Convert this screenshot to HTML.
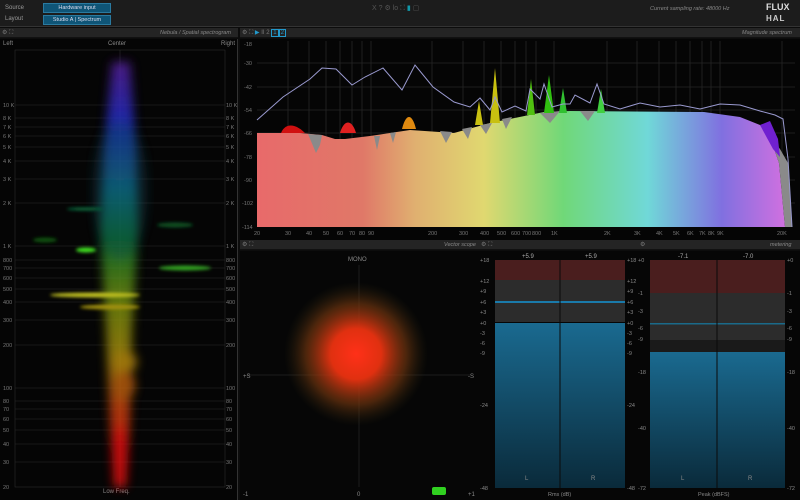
<!DOCTYPE html>
<html><head><meta charset="utf-8"><style>
*{margin:0;padding:0;box-sizing:border-box}
body{width:800px;height:500px;background:#0c0c0c;font-family:"Liberation Sans",sans-serif;color:#aaa;overflow:hidden;position:relative}
.a{position:absolute}
.hdr{position:absolute;height:10px;background:#242424;border-bottom:1px solid #111}
.t{position:absolute;font-size:6px;color:#999;white-space:nowrap}
.it{font-style:italic;color:#888;font-size:5.5px}
.btn{position:absolute;background:#0f5577;border:1px solid #2a7aa0;color:#dde;font-size:5.5px;text-align:center;line-height:8px}
</style></head><body>
<div class="a" style="left:0;top:0;width:800px;height:27px;background:#1c1c1c;border-bottom:1px solid #333"></div>
<div class="t" style="left:5px;top:5px">Source</div>
<div class="t" style="left:5px;top:16px">Layout</div>
<div class="btn" style="left:43px;top:3px;width:68px;height:10px">Hardware input</div>
<div class="btn" style="left:43px;top:15px;width:68px;height:10px">Studio A | Spectrum</div>
<div class="t" style="left:372px;top:4px;color:#555;font-size:7px">X ? ⚙ lo ⛶ <span style="color:#19a">▮</span> ▢</div>
<div class="t it" style="left:650px;top:6px">Current sampling rate: 48000 Hz</div>
<div class="t" style="left:766px;top:2px;color:#ddd;font-weight:bold;font-size:9px">FLUX</div>
<div class="t" style="left:766px;top:14px;color:#ccc;font-weight:bold;font-size:8px;letter-spacing:1px">HAL</div>

<!-- left panel -->
<div class="hdr" style="left:0;top:28px;width:238px"></div>
<div class="t" style="left:2px;top:29px;color:#777">⚙ ⛶</div>
<div class="t it" style="left:160px;top:30px">Nebula / Spatial spectrogram</div>
<div class="a" style="left:0;top:39px;width:238px;height:461px;background:#050505;border-right:1px solid #333"></div>
<div class="t" style="left:3px;top:41px;color:#888">Left</div>
<div class="t" style="left:108px;top:41px;color:#888">Center</div>
<div class="t" style="left:221px;top:41px;color:#888">Right</div>
<div class="t" style="left:103px;top:489px;color:#888">Low Freq.</div>
<svg class="a" style="left:0;top:0" width="240" height="500">
<defs>
<linearGradient id="col" x1="0" y1="0" x2="0" y2="1">
<stop offset="0" stop-color="#5a20a0"/><stop offset=".15" stop-color="#2030d0"/><stop offset=".3" stop-color="#1080a0"/><stop offset=".42" stop-color="#108030"/><stop offset=".55" stop-color="#709010"/><stop offset=".7" stop-color="#b09010"/><stop offset=".82" stop-color="#d04010"/><stop offset="1" stop-color="#ff1010"/></linearGradient>
<filter id="b4"><feGaussianBlur stdDeviation="5"/></filter>
<filter id="b2"><feGaussianBlur stdDeviation="1.5"/></filter>
</defs>
<g stroke="#2a2a2a" stroke-width="0.6">
<line x1="15" y1="105" x2="225" y2="105"/><line x1="15" y1="118" x2="225" y2="118"/><line x1="15" y1="127" x2="225" y2="127"/><line x1="15" y1="136" x2="225" y2="136"/><line x1="15" y1="147" x2="225" y2="147"/><line x1="15" y1="161" x2="225" y2="161"/><line x1="15" y1="179" x2="225" y2="179"/><line x1="15" y1="203" x2="225" y2="203"/><line x1="15" y1="246" x2="225" y2="246"/><line x1="15" y1="260" x2="225" y2="260"/><line x1="15" y1="268" x2="225" y2="268"/><line x1="15" y1="278" x2="225" y2="278"/><line x1="15" y1="289" x2="225" y2="289"/><line x1="15" y1="302" x2="225" y2="302"/><line x1="15" y1="320" x2="225" y2="320"/><line x1="15" y1="345" x2="225" y2="345"/><line x1="15" y1="388" x2="225" y2="388"/><line x1="15" y1="401" x2="225" y2="401"/><line x1="15" y1="409" x2="225" y2="409"/><line x1="15" y1="419" x2="225" y2="419"/><line x1="15" y1="430" x2="225" y2="430"/><line x1="15" y1="444" x2="225" y2="444"/><line x1="15" y1="462" x2="225" y2="462"/><line x1="120" y1="50" x2="120" y2="487"/>
<rect x="15" y="50" width="210" height="437" fill="none"/></g>
<g filter="url(#b4)" opacity=".8">
<path d="M112 62 L130 62 L136 150 L138 230 L132 330 L130 420 L126 487 L114 487 L110 420 L106 330 L100 230 L104 150Z" fill="url(#col)"/>
<ellipse cx="120" cy="190" rx="28" ry="70" fill="#105060" opacity=".35"/>
<ellipse cx="125" cy="362" rx="12" ry="10" fill="#c09010"/>
<ellipse cx="125" cy="385" rx="10" ry="14" fill="#c06010"/>
<ellipse cx="120" cy="455" rx="8" ry="30" fill="#f01010"/>
</g>
<g filter="url(#b2)">
<ellipse cx="95" cy="295" rx="45" ry="2.5" fill="#c0c020"/>
<ellipse cx="110" cy="307" rx="30" ry="2.5" fill="#a09010"/>
<ellipse cx="185" cy="268" rx="26" ry="2.5" fill="#30a020"/>
<ellipse cx="86" cy="250" rx="10" ry="2.5" fill="#40e020"/>
<ellipse cx="45" cy="240" rx="12" ry="2.5" fill="#105010"/>
<ellipse cx="85" cy="209" rx="18" ry="1.5" fill="#107040"/>
<ellipse cx="175" cy="225" rx="18" ry="2.5" fill="#105020"/>
</g>
<g fill="#777" font-size="5.5" font-family="Liberation Sans">
<text x="3" y="107">10 K</text><text x="3" y="120">8 K</text><text x="3" y="129">7 K</text><text x="3" y="138">6 K</text><text x="3" y="149">5 K</text><text x="3" y="163">4 K</text><text x="3" y="181">3 K</text><text x="3" y="205">2 K</text><text x="3" y="248">1 K</text><text x="3" y="262">800</text><text x="3" y="270">700</text><text x="3" y="280">600</text><text x="3" y="291">500</text><text x="3" y="304">400</text><text x="3" y="322">300</text><text x="3" y="347">200</text><text x="3" y="390">100</text><text x="3" y="403">80</text><text x="3" y="411">70</text><text x="3" y="421">60</text><text x="3" y="432">50</text><text x="3" y="446">40</text><text x="3" y="464">30</text><text x="3" y="489">20</text>
<text x="226" y="107">10 K</text><text x="226" y="120">8 K</text><text x="226" y="129">7 K</text><text x="226" y="138">6 K</text><text x="226" y="149">5 K</text><text x="226" y="163">4 K</text><text x="226" y="181">3 K</text><text x="226" y="205">2 K</text><text x="226" y="248">1 K</text><text x="226" y="262">800</text><text x="226" y="270">700</text><text x="226" y="280">600</text><text x="226" y="291">500</text><text x="226" y="304">400</text><text x="226" y="322">300</text><text x="226" y="347">200</text><text x="226" y="390">100</text><text x="226" y="403">80</text><text x="226" y="411">70</text><text x="226" y="421">60</text><text x="226" y="432">50</text><text x="226" y="446">40</text><text x="226" y="464">30</text><text x="226" y="489">20</text>
</g>
</svg>

<!-- spectrum -->
<div class="hdr" style="left:240px;top:28px;width:560px"></div>
<div class="t" style="left:242px;top:29px;color:#777">⚙ ⛶ <span style="color:#29c">▶ </span>ΙΙ 2 <span style="border:1px solid #29c;color:#29c;padding:0 1px">1</span><span style="border:1px solid #29c;color:#29c;padding:0 1px">2</span></div>
<div class="t it" style="left:742px;top:30px">Magnitude spectrum</div>
<svg class="a" style="left:240px;top:39px" width="560" height="201">
<defs>
<linearGradient id="sp" x1="17" y1="0" x2="545" y2="0" gradientUnits="userSpaceOnUse">
<stop offset="0" stop-color="#e86a6a"/><stop offset=".2" stop-color="#e07868"/><stop offset=".3" stop-color="#e0b070"/><stop offset=".43" stop-color="#e0d870"/><stop offset=".58" stop-color="#70d878"/><stop offset=".74" stop-color="#70d8d8"/><stop offset=".88" stop-color="#8070e0"/><stop offset="1" stop-color="#d070e0"/></linearGradient>
</defs>
<rect width="560" height="201" fill="#050505"/>
<g stroke="#262626" stroke-width="0.8">
<line x1="17" y1="24" x2="555" y2="24"/><line x1="17" y1="48" x2="555" y2="48"/><line x1="17" y1="71" x2="555" y2="71"/><line x1="17" y1="94" x2="555" y2="94"/><line x1="17" y1="118" x2="555" y2="118"/><line x1="17" y1="141" x2="555" y2="141"/><line x1="17" y1="164" x2="555" y2="164"/>
<line x1="48" y1="2" x2="48" y2="188"/><line x1="69" y1="2" x2="69" y2="188"/><line x1="86" y1="2" x2="86" y2="188"/><line x1="100" y1="2" x2="100" y2="188"/><line x1="112" y1="2" x2="112" y2="188"/><line x1="122" y1="2" x2="122" y2="188"/><line x1="131" y1="2" x2="131" y2="188"/><line x1="192" y1="2" x2="192" y2="188"/><line x1="223" y1="2" x2="223" y2="188"/><line x1="244" y1="2" x2="244" y2="188"/><line x1="261" y1="2" x2="261" y2="188"/><line x1="275" y1="2" x2="275" y2="188"/><line x1="286" y1="2" x2="286" y2="188"/><line x1="296" y1="2" x2="296" y2="188"/><line x1="314" y1="2" x2="314" y2="188"/><line x1="367" y1="2" x2="367" y2="188"/><line x1="397" y1="2" x2="397" y2="188"/><line x1="419" y1="2" x2="419" y2="188"/><line x1="436" y1="2" x2="436" y2="188"/><line x1="450" y1="2" x2="450" y2="188"/><line x1="462" y1="2" x2="462" y2="188"/><line x1="471" y1="2" x2="471" y2="188"/><line x1="480" y1="2" x2="480" y2="188"/><line x1="542" y1="2" x2="542" y2="188"/>
</g>
<path d="M17 94 L60 94 L82 96 L95 100 L105 100 L130 97 L170 91 L214 94 L250 84 L304 73 L330 72 L464 73 L500 78 L520 86 L530 98 L539 124 L545 188 L17 188Z" fill="url(#sp)"/>
<g fill="#8a8a8a">
<path d="M68 95 L82 96 L80 106 L76 114Z"/>
<path d="M134 97 L140 97 L137 111Z"/>
<path d="M150 94 L156 93 L153 104Z"/>
<path d="M200 92 L212 93 L206 104Z"/>
<path d="M222 90 L232 88 L228 100Z"/>
<path d="M240 86 L252 84 L246 95Z"/>
<path d="M262 80 L272 78 L266 90Z"/>
<path d="M300 74 L320 72 L310 84Z"/>
<path d="M340 72 L355 72 L348 82Z"/>
<path d="M530 98 L540 110 L548 124 L552 188 L545 188 L539 124Z"/>
</g>
<path d="M41 94 C45 84 55 84 65 94Z" fill="#d01010"/>
<path d="M100 94 C104 80 112 80 116 94Z" fill="#e02020"/>
<path d="M162 90 C166 74 172 74 176 90Z" fill="#e08a10"/>
<path d="M235 86 L239 62 L243 86Z" fill="#c8c010"/>
<path d="M250 84 L255 29 L260 84Z" fill="#c8c010"/>
<path d="M287 76 L291 40 L295 76Z" fill="#50c010"/>
<path d="M304 74 L309 36 L314 74Z" fill="#30c010"/>
<path d="M319 74 L323 49 L327 74Z" fill="#30c030"/>
<path d="M357 74 L361 50 L365 74Z" fill="#40d040"/>
<path d="M520 86 L530 82 L538 100 L540 118 L533 110Z" fill="#7020d0"/>
<polyline fill="none" stroke="#9a9ad0" stroke-width="1" points="17,81 43,58 70,40 82,29 96,30 112,46 125,38 143,29 162,51 175,26 193,48 214,63 230,68 240,59 250,71 255,58 262,73 275,67 286,72 290,50 300,60 304,45 312,68 323,65 330,65 335,56 350,64 357,45 364,65 380,70 400,64 420,68 440,66 460,70 480,65 500,66 520,72 535,76 543,80 548,120 552,188"/>
<g fill="#777" font-size="5.5" font-family="Liberation Sans">
<text x="4" y="7">-18</text><text x="4" y="26">-30</text><text x="4" y="50">-42</text><text x="4" y="73">-54</text><text x="4" y="96">-66</text><text x="4" y="120">-78</text><text x="4" y="143">-90</text><text x="2" y="166">-102</text><text x="2" y="190">-114</text>
<text x="14" y="196">20</text><text x="45" y="196">30</text><text x="66" y="196">40</text><text x="83" y="196">50</text><text x="97" y="196">60</text><text x="109" y="196">70</text><text x="119" y="196">80</text><text x="128" y="196">90</text><text x="188" y="196">200</text><text x="219" y="196">300</text><text x="240" y="196">400</text><text x="257" y="196">500</text><text x="271" y="196">600</text><text x="282" y="196">700</text><text x="292" y="196">800</text><text x="311" y="196">1K</text><text x="364" y="196">2K</text><text x="394" y="196">3K</text><text x="416" y="196">4K</text><text x="433" y="196">5K</text><text x="447" y="196">6K</text><text x="459" y="196">7K</text><text x="468" y="196">8K</text><text x="477" y="196">9K</text><text x="537" y="196">20K</text>
</g>
</svg>

<!-- vector scope -->
<div class="hdr" style="left:240px;top:240px;width:238px"></div>
<div class="t" style="left:242px;top:241px;color:#777">⚙ ⛶</div>
<div class="t it" style="left:444px;top:242px">Vector scope</div>
<svg class="a" style="left:240px;top:251px" width="238" height="249">
<defs><radialGradient id="vs" cx=".5" cy=".5" r=".5">
<stop offset="0" stop-color="#ff3018"/><stop offset=".35" stop-color="#e03010"/><stop offset=".7" stop-color="#7a3a10" stop-opacity=".6"/><stop offset="1" stop-color="#302a10" stop-opacity="0"/></radialGradient></defs>
<rect width="238" height="249" fill="#060606"/>
<line x1="119" y1="14" x2="119" y2="236" stroke="#1c1c1c"/>
<line x1="8" y1="124" x2="230" y2="124" stroke="#1c1c1c"/>
<circle cx="116" cy="103" r="72" fill="url(#vs)"/>
<rect x="192" y="236" width="14" height="8" rx="2" fill="#30d020"/>
<g fill="#888" font-size="6" font-family="Liberation Sans"><text x="108" y="10">MONO</text><text x="3" y="127">+S</text><text x="228" y="127">-S</text><text x="3" y="245">-1</text><text x="117" y="245">0</text><text x="228" y="245">+1</text></g>
</svg>

<!-- metering -->
<div class="hdr" style="left:478px;top:240px;width:322px"></div>
<div class="t" style="left:481px;top:241px;color:#777">⚙ ⛶</div>
<div class="t" style="left:640px;top:241px;color:#777">⚙</div>
<div class="t it" style="left:770px;top:242px">metering</div>
<svg class="a" style="left:478px;top:251px" width="322" height="249">
<defs><linearGradient id="bl" x1="0" y1="0" x2="0" y2="1"><stop offset="0" stop-color="#1a6a90"/><stop offset="1" stop-color="#0a2a3a"/></linearGradient></defs>
<rect width="322" height="249" fill="#060606"/>
<rect x="17" y="9" width="130" height="20" fill="#4a1e1e"/>
<rect x="17" y="29" width="130" height="42" fill="#2c2c2c"/>
<rect x="17" y="50" width="130" height="2" fill="#1a7aaa"/>
<rect x="17" y="72" width="130" height="165" fill="url(#bl)"/>
<rect x="172" y="9" width="135" height="33" fill="#4a1e1e"/>
<rect x="172" y="42" width="135" height="47" fill="#2c2c2c"/>
<rect x="172" y="89" width="135" height="12" fill="#1a1a1a"/>
<rect x="172" y="72" width="135" height="1.5" fill="#1a6a8a"/>
<rect x="172" y="101" width="135" height="136" fill="url(#bl)"/>
<g stroke="#0a0a0a" stroke-width="1"><line x1="82" y1="9" x2="82" y2="237"/><line x1="239" y1="9" x2="239" y2="237"/></g>
<g fill="#aaa" font-size="6" font-family="Liberation Sans">
<text x="44" y="7">+5.9</text><text x="107" y="7">+5.9</text><text x="200" y="7">-7.1</text><text x="265" y="7">-7.0</text>
<text x="47" y="229" fill="#888">L</text><text x="113" y="229" fill="#888">R</text><text x="203" y="229" fill="#888">L</text><text x="270" y="229" fill="#888">R</text>
</g>
<g fill="#888" font-size="5.5" font-family="Liberation Sans">
<text x="2" y="11">+18</text><text x="2" y="32">+12</text><text x="2" y="42">+9</text><text x="2" y="53">+6</text><text x="2" y="63">+3</text><text x="2" y="74">+0</text><text x="2" y="84">-3</text><text x="2" y="94">-6</text><text x="2" y="104">-9</text><text x="2" y="156">-24</text><text x="2" y="239">-48</text>
<text x="149" y="11">+18</text><text x="149" y="32">+12</text><text x="149" y="42">+9</text><text x="149" y="53">+6</text><text x="149" y="63">+3</text><text x="149" y="74">+0</text><text x="149" y="84">-3</text><text x="149" y="94">-6</text><text x="149" y="104">-9</text><text x="149" y="156">-24</text><text x="149" y="239">-48</text>
<text x="160" y="11">+0</text><text x="160" y="44">-1</text><text x="160" y="62">-3</text><text x="160" y="79">-6</text><text x="160" y="90">-9</text><text x="160" y="123">-18</text><text x="160" y="179">-40</text><text x="160" y="239">-72</text>
<text x="309" y="11">+0</text><text x="309" y="44">-1</text><text x="309" y="62">-3</text><text x="309" y="79">-6</text><text x="309" y="90">-9</text><text x="309" y="123">-18</text><text x="309" y="179">-40</text><text x="309" y="239">-72</text>
<text x="70" y="245">Rms (dB)</text><text x="220" y="245">Peak (dBFS)</text>
</g>
</svg>
</body></html>
